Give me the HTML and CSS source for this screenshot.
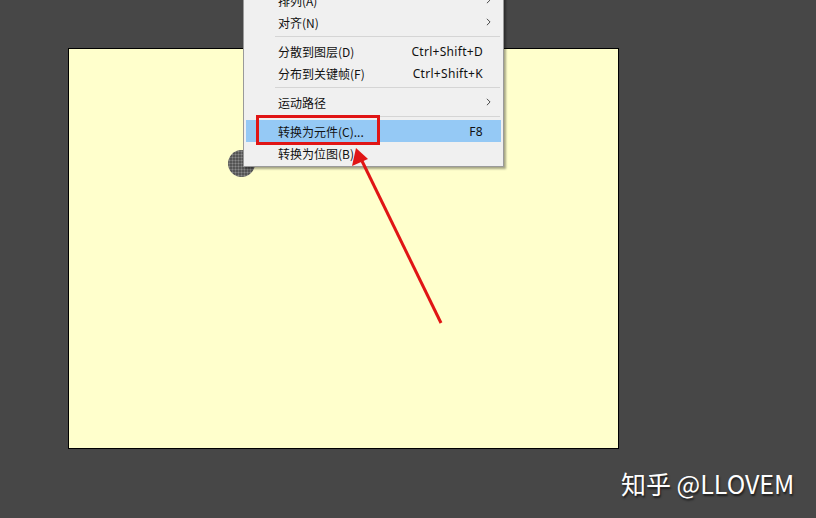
FILE: index.html
```html
<!DOCTYPE html>
<html lang="zh">
<head>
  <meta charset="UTF-8">
  <title>转换为元件</title>
  <link rel="stylesheet" href="styles.css">
</head>
<body>

<div class="stage"></div>

<!-- selected shape under the menu -->
<div class="dot-shape"></div>

<!-- context menu -->
<ul class="menu">
  <li class="item"><span class="label">排列(A)</span><span class="sub"><svg viewBox="0 0 6 10"><path d="M1 1 L5 5 L1 9"/></svg></span></li>
  <li class="item"><span class="label">对齐(N)</span><span class="sub"><svg viewBox="0 0 6 10"><path d="M1 1 L5 5 L1 9"/></svg></span></li>
  <li class="sep"></li>
  <li class="item"><span class="label">分散到图层(D)</span><span class="key">Ctrl+Shift+D</span></li>
  <li class="item"><span class="label">分布到关键帧(F)</span><span class="key">Ctrl+Shift+K</span></li>
  <li class="sep"></li>
  <li class="item"><span class="label">运动路径</span><span class="sub"><svg viewBox="0 0 6 10"><path d="M1 1 L5 5 L1 9"/></svg></span></li>
  <li class="sep"></li>
  <li class="item active"><span class="label">转换为元件(C)...</span><span class="key">F8</span></li>
  <li class="item"><span class="label">转换为位图(B)</span></li>
</ul>

<!-- annotation -->
<div class="mark"></div>
<svg class="arrow" width="816" height="518" viewBox="0 0 816 518">
  <line x1="441" y1="323" x2="362" y2="161" stroke="#e01515" stroke-width="3"/>
  <polygon points="356,148 352,166 368,159" fill="#e01515"/>
</svg>

<div class="watermark">知乎 @LLOVEM</div>

</body>
</html>
```

FILE: styles.css
```css
html, body {
  margin: 0;
  padding: 0;
  height: 100%;
  overflow: hidden;
}
body {
  background-color: #474747;
  font-family: "Noto Sans CJK SC", "Noto Sans", sans-serif;
}
.stage {
  margin: 48px 0 0 68px;
  width: 549px;
  height: 399px;
  background-color: #ffffcc;
  border: 1px solid #000;
}
.dot-shape {
  position: absolute;
  left: 228px;
  top: 150px;
  width: 27px;
  height: 27px;
  border-radius: 50%;
  background-color: #555;
  background-image: radial-gradient(circle, #8a8a8a 0.8px, transparent 1.2px);
  background-size: 3px 3px;
}
.menu {
  position: absolute;
  left: 243px;
  top: -14px;
  width: 259px;
  margin: 0;
  padding: 2px 0 2px;
  list-style: none;
  background-color: #f0f0f0;
  border: 1px solid #9a9a9a;
  box-shadow: 2px 2px 2px rgba(0, 0, 0, 0.35);
  font-size: 12px;
  color: #111;
}
.item {
  display: flex;
  align-items: center;
  height: 22px;
  margin: 0 2px;
  padding: 0 18px 0 32px;
}
.item.active {
  background-color: #95c9f5;
}
.label {
  flex: 1;
}
.key {
  font-family: "Noto Sans", sans-serif;
  letter-spacing: 0.3px;
}
.sub {
  display: flex;
  margin-right: -8px;
}
.sub svg {
  width: 5px;
  height: 8px;
  fill: none;
  stroke: #444;
  stroke-width: 1.2;
}
.sep {
  height: 1px;
  margin: 3px 3px 3px 31px;
  background-color: #d5d5d5;
}
.mark {
  position: absolute;
  left: 256px;
  top: 115px;
  width: 118px;
  height: 24px;
  border: 3px solid #e01515;
}
.arrow {
  position: absolute;
  left: 0;
  top: 0;
}
.watermark {
  position: absolute;
  left: 621px;
  top: 465px;
  font-size: 25px;
  color: #fff;
  text-shadow: 1px 2px 2px rgba(0, 0, 0, 0.6);
}
```
